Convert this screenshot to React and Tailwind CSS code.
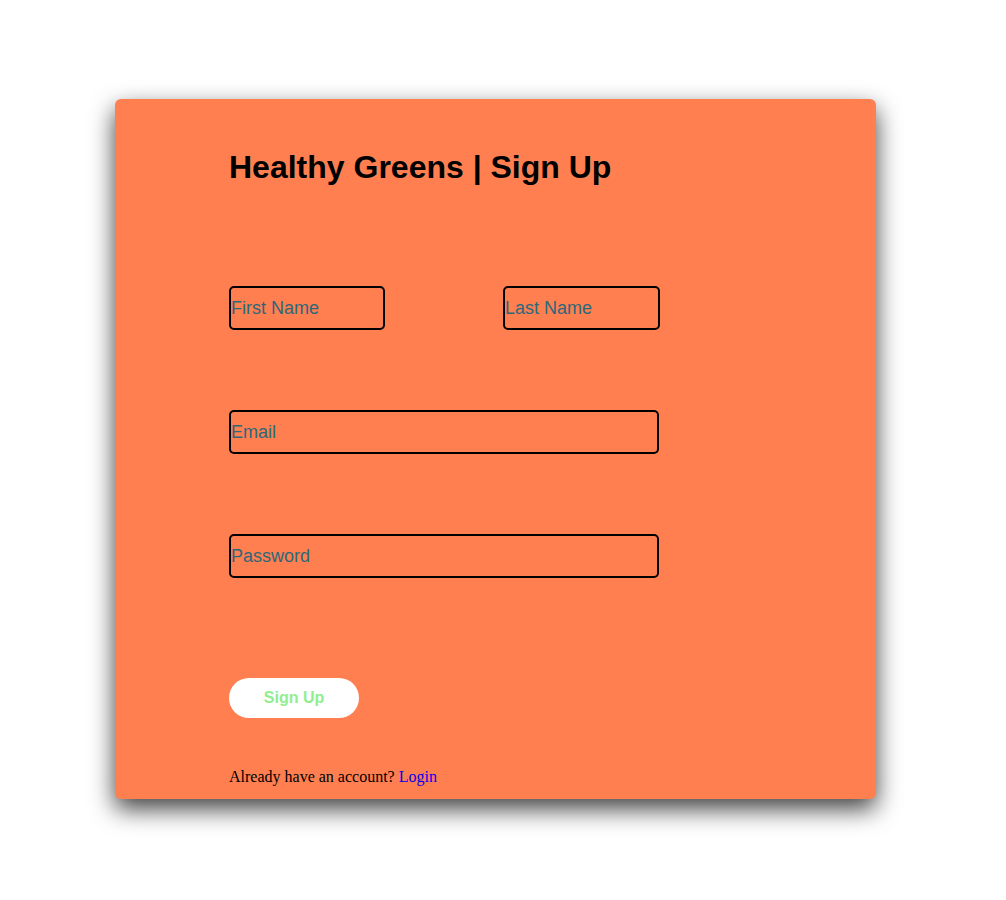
export default function App() {
  const inputCls =
    "h-[44px] border-2 border-black rounded-[5px] bg-transparent px-0 text-[18px] text-black placeholder:text-[#2c687a] outline-none font-['Liberation_Sans',Arial,sans-serif]";
  return (
    <div className="min-h-[900px] bg-white pt-[99px] font-['Liberation_Sans',Arial,sans-serif]">
      <div className="ml-[115px] w-[761px] h-[700px] bg-[#ff7f50] rounded-[6px] shadow-[0_10px_24px_rgba(0,0,0,0.75)] pl-[114px] pt-[50px] flex flex-col">
        <h1 className="text-[32px] leading-[37px] font-bold text-black">Healthy Greens | Sign Up</h1>
        <div className="mt-[100px] flex gap-[118px]">
          <input className={`${inputCls} w-[156px]`} placeholder="First Name" />
          <input className={`${inputCls} w-[157px]`} placeholder="Last Name" />
        </div>
        <input className={`${inputCls} w-[430px] mt-[80px]`} placeholder="Email" />
        <input className={`${inputCls} w-[430px] mt-[80px]`} placeholder="Password" type="password" />
        <button className="mt-[100px] w-[130px] h-[40px] rounded-full bg-white text-[#90ee90] font-bold text-[16px] font-['Liberation_Sans',Arial,sans-serif]">
          Sign Up
        </button>
        <p className="mt-[50px] text-[16px] leading-[18px] text-black font-['Liberation_Serif','Times_New_Roman',serif]">
          Already have an account? <a href="#" className="text-[#0000ee]">Login</a>
        </p>
      </div>
    </div>
  );
}
